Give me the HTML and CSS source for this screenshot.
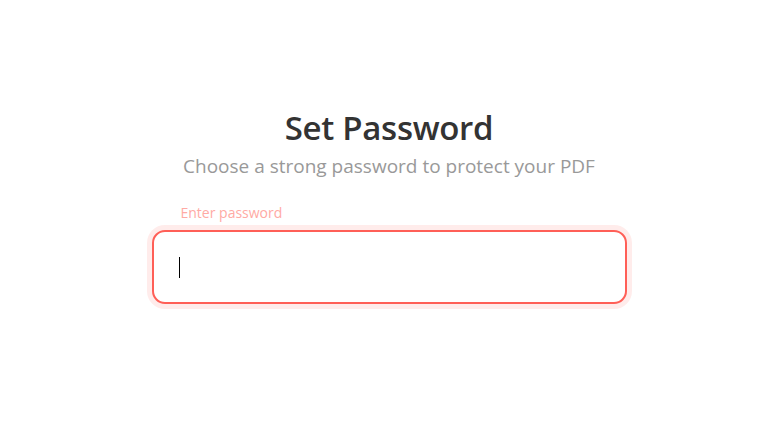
FILE: index.html
```html
<!DOCTYPE html>
<html lang="en">
<head>
<meta charset="utf-8">
<title>Set Password</title>
<link rel="stylesheet" href="styles.css">
</head>
<body>
<main class="page">
  <section class="panel">
    <h1 class="title">Set Password</h1>
    <p class="subtitle">Choose a strong password to protect your PDF</p>
    <label class="label" for="pw">Enter password</label>
    <div class="field" id="pw"><span class="caret"></span></div>
  </section>
</main>
</body>
</html>
```

FILE: styles.css
```css
* { box-sizing: border-box; }
html, body {
  margin: 0;
  padding: 0;
  background: #ffffff;
}
body {
  font-family: "Open Sans", "Noto Sans", sans-serif;
  width: 775px;
  height: 447px;
  overflow: hidden;
}
.page {
  display: flex;
  justify-content: center;
  padding-top: 106px;
  padding-left: 3px;
}
.panel {
  width: 475px;
  display: flex;
  flex-direction: column;
}
.title {
  margin: 0;
  text-align: center;
  font-size: 33px;
  line-height: 44px;
  font-weight: 600;
  color: #333333;
  letter-spacing: -0.3px;
}
.subtitle {
  margin: 4px 0 0;
  text-align: center;
  font-size: 19px;
  line-height: 25px;
  color: #999999;
}
.label {
  margin: 24px 0 0 29px;
  font-size: 14px;
  line-height: 19px;
  color: #ffaaa4;
}
.field {
  margin-top: 8px;
  height: 74px;
  border: 2px solid #ff5f57;
  border-radius: 13px;
  box-shadow: 0 0 0 5px #ffeceb;
  padding-left: 25px;
  display: flex;
  align-items: center;
  background: #fff;
}
.caret {
  display: block;
  width: 1px;
  height: 21px;
  background: #000;
}
```
